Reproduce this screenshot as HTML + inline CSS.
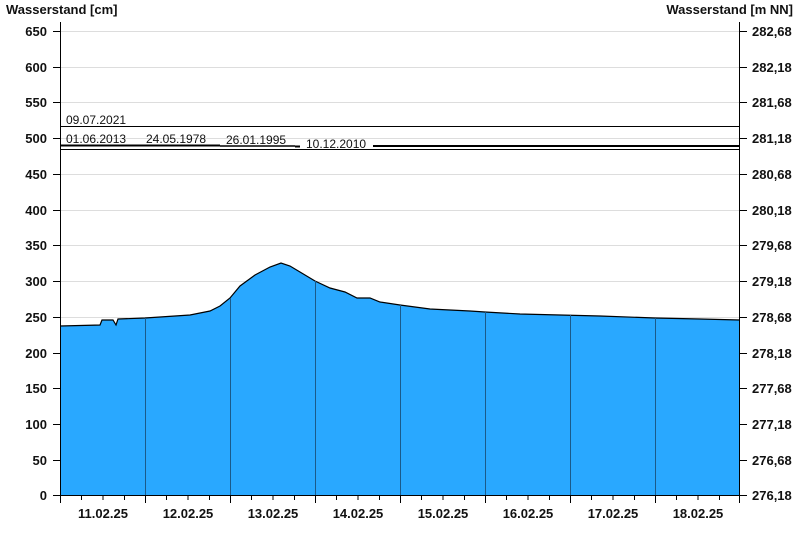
<!DOCTYPE html>
<html><head><style>
body{margin:0;background:#fff;width:800px;height:550px;overflow:hidden}
svg text{font-family:"Liberation Sans",Arial,sans-serif}
</style></head><body>
<svg width="800" height="550" xmlns="http://www.w3.org/2000/svg">
<g font-size="13" font-weight="bold" fill="#111">
<text x="6" y="14">Wasserstand [cm]</text>
<text x="793" y="14" text-anchor="end">Wasserstand [m NN]</text>
</g>
<g stroke="#ddd" stroke-width="1">
<line x1="60" x2="740" y1="31.5" y2="31.5"/><line x1="60" x2="740" y1="67.5" y2="67.5"/>
<line x1="60" x2="740" y1="102.5" y2="102.5"/><line x1="60" x2="740" y1="138.5" y2="138.5"/>
<line x1="60" x2="740" y1="174.5" y2="174.5"/><line x1="60" x2="740" y1="210.5" y2="210.5"/>
<line x1="60" x2="740" y1="245.5" y2="245.5"/><line x1="60" x2="740" y1="281.5" y2="281.5"/>
<line x1="60" x2="740" y1="317.5" y2="317.5"/><line x1="60" x2="740" y1="353.5" y2="353.5"/>
<line x1="60" x2="740" y1="388.5" y2="388.5"/><line x1="60" x2="740" y1="424.5" y2="424.5"/>
<line x1="60" x2="740" y1="460.5" y2="460.5"/>
</g>
<path d="M60,326 L100,325 L102,320 L113,320 L116,325 L118,319 L145,318 L190,315 L210,311 L220,306 L230,298 L240,286 L255,275 L270,267 L281,263 L290,266 L300,272 L315,281 L330,288 L345,292 L357,298 L370,298 L380,302 L400,305 L430,309 L470,311 L485,312 L520,314 L560,315 L600,316 L655,318 L700,319 L740,320 L740,495 L60,495 Z" fill="#29a8ff" stroke="none"/>
<path d="M60,326 L100,325 L102,320 L113,320 L116,325 L118,319 L145,318 L190,315 L210,311 L220,306 L230,298 L240,286 L255,275 L270,267 L281,263 L290,266 L300,272 L315,281 L330,288 L345,292 L357,298 L370,298 L380,302 L400,305 L430,309 L470,311 L485,312 L520,314 L560,315 L600,316 L655,318 L700,319 L740,320" fill="none" stroke="#000" stroke-width="1.2"/>
<g stroke="#1a5a8a" stroke-width="1">
<line x1="145.5" x2="145.5" y1="318" y2="495"/><line x1="230.5" x2="230.5" y1="298" y2="495"/>
<line x1="315.5" x2="315.5" y1="281" y2="495"/><line x1="400.5" x2="400.5" y1="305" y2="495"/>
<line x1="485.5" x2="485.5" y1="312" y2="495"/><line x1="570.5" x2="570.5" y1="315" y2="495"/>
<line x1="655.5" x2="655.5" y1="318" y2="495"/>
</g>
<g stroke="#000">
<line x1="60" x2="740" y1="126.5" y2="126.5" stroke-width="1"/>
<line x1="60" x2="740" y1="149.5" y2="149.5" stroke-width="1"/>
<line x1="60" x2="220" y1="145.5" y2="145.5" stroke-width="2"/>
<line x1="220" x2="295" y1="146" y2="146" stroke-width="1.5"/>
<line x1="295" x2="300" y1="146.5" y2="146.5" stroke-width="2"/>
<line x1="373" x2="740" y1="146" y2="146" stroke-width="2"/>
</g>
<g font-size="12" fill="#111">
<text x="66" y="124">09.07.2021</text>
<text x="66" y="143">01.06.2013</text>
<text x="146" y="143">24.05.1978</text>
<text x="226" y="144">26.01.1995</text>
<text x="306" y="148">10.12.2010</text>
</g>
<g stroke="#000" stroke-width="1">
<line x1="60.5" x2="60.5" y1="22" y2="495"/>
<line x1="739.5" x2="739.5" y1="22" y2="495"/>
<line x1="60" x2="740" y1="495.5" y2="495.5"/>
</g>
<g stroke="#000" stroke-width="1" id="yt">
<path d="M53,31.5h7M53,67.5h7M53,102.5h7M53,138.5h7M53,174.5h7M53,210.5h7M53,245.5h7M53,281.5h7M53,317.5h7M53,353.5h7M53,388.5h7M53,424.5h7M53,460.5h7M53,495.5h7"/>
<path d="M740,31.5h7M740,67.5h7M740,102.5h7M740,138.5h7M740,174.5h7M740,210.5h7M740,245.5h7M740,281.5h7M740,317.5h7M740,353.5h7M740,388.5h7M740,424.5h7M740,460.5h7M740,495.5h7"/>
<path d="M60.5,495v8M145.5,495v8M230.5,495v8M315.5,495v8M400.5,495v8M485.5,495v8M570.5,495v8M655.5,495v8M739.5,495v8"/>
<path d="M81.5,495v5M103,495v5M124.5,495v5M166.5,495v5M188,495v5M209.5,495v5M251.5,495v5M273,495v5M294.5,495v5M336.5,495v5M358,495v5M379.5,495v5M421.5,495v5M443,495v5M464.5,495v5M506.5,495v5M528,495v5M549.5,495v5M591.5,495v5M613,495v5M634.5,495v5M676.5,495v5M698,495v5M719.5,495v5"/>
</g>
<g font-size="13" font-weight="bold" fill="#111" text-anchor="end">
<text x="47" y="36">650</text><text x="47" y="72">600</text><text x="47" y="107">550</text>
<text x="47" y="143">500</text><text x="47" y="179">450</text><text x="47" y="215">400</text>
<text x="47" y="250">350</text><text x="47" y="286">300</text><text x="47" y="322">250</text>
<text x="47" y="358">200</text><text x="47" y="393">150</text><text x="47" y="429">100</text>
<text x="47" y="465">50</text><text x="47" y="500">0</text>
</g>
<g font-size="13" font-weight="bold" fill="#111">
<text x="752" y="36">282,68</text><text x="752" y="72">282,18</text><text x="752" y="107">281,68</text>
<text x="752" y="143">281,18</text><text x="752" y="179">280,68</text><text x="752" y="215">280,18</text>
<text x="752" y="250">279,68</text><text x="752" y="286">279,18</text><text x="752" y="322">278,68</text>
<text x="752" y="358">278,18</text><text x="752" y="393">277,68</text><text x="752" y="429">277,18</text>
<text x="752" y="465">276,68</text><text x="752" y="500">276,18</text>
</g>
<g font-size="13" font-weight="bold" fill="#111" text-anchor="middle">
<text x="103" y="518">11.02.25</text><text x="188" y="518">12.02.25</text><text x="273" y="518">13.02.25</text>
<text x="358" y="518">14.02.25</text><text x="443" y="518">15.02.25</text><text x="528" y="518">16.02.25</text>
<text x="613" y="518">17.02.25</text><text x="698" y="518">18.02.25</text>
</g>
</svg>
</body></html>
